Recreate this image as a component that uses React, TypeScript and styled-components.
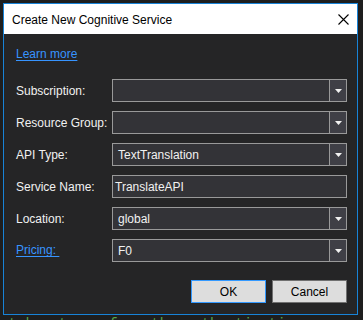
import React from 'react';
import styled, { createGlobalStyle } from 'styled-components';

const GlobalStyle = createGlobalStyle`
    html, body {
        margin: 0;
        padding: 0;
        background: #1e1e1e;
        overflow: hidden;
    }
    body {
        font-family: "Liberation Sans", Arial, sans-serif;
        font-size: 12px;
    }
`

const Page = styled.div`
    width: 363px;
    height: 320px;
    padding: 3px 5px 0 3px;
    box-sizing: border-box;
    overflow: hidden;
`
const Dialog = styled.div`
    width: 355px;
    border: 1px solid #1883d7;
    border-top-color: #1883d7;
    box-sizing: border-box;
    background: #252526;
`
const TitleBar = styled.div`
    height: 30px;
    background: #ffffff;
    display: flex;
    align-items: center;
    justify-content: space-between;
    padding: 0 8px 0 8px;
`
const Title = styled.span`
    color: #000000;
    font-size: 12px;
    padding-top: 1px;
`
const Body = styled.div`
    padding: 13px 10px 11px 12px;
    display: flex;
    flex-direction: column;
`
const Link = styled.a`
    color: #3794ff;
    text-decoration: underline;
    text-underline-offset: 2px;
    line-height: 15px;
    height: 15px;
    white-space: pre;
    cursor: pointer;
`
const Form = styled.div`
    margin-top: 17px;
    display: grid;
    grid-template-columns: 96px 235px;
    grid-auto-rows: 23px;
    row-gap: 9px;
    align-items: center;
`
const Label = styled.span`
    color: #f1f1f1;
`
const Field = styled.div<{ $value?: boolean }>`
    height: 23px;
    box-sizing: border-box;
    border: 1px solid #999999;
    background: #333337;
    color: #f1f1f1;
    display: flex;
    align-items: stretch;
`
const FieldText = styled.span<{ $inset: number }>`
    flex: 1;
    display: flex;
    align-items: center;
    padding-left: ${p => p.$inset}px;
`
const DropButton = styled.span`
    width: 16px;
    border-left: 1px solid #999999;
    background: #3f3f46;
    display: flex;
    align-items: center;
    justify-content: center;
`
const Buttons = styled.div`
    margin-top: 18px;
    display: flex;
    justify-content: flex-end;
    gap: 6px;
    padding-right: 0;
    width: 331px;
`
const Button = styled.button<{ $primary?: boolean }>`
    width: 75px;
    height: 23px;
    box-sizing: border-box;
    border: 1px solid ${p => p.$primary ? '#3399ff' : '#707070'};
    background: #dddddd;
    color: #000000;
    font-family: "Liberation Sans", Arial, sans-serif;
    font-size: 12px;
    padding: 0;
`
const Behind = styled.div`
    margin: 1px 0 0 -3px;
    font-family: "Liberation Mono", monospace;
    font-size: 14px;
    color: #57a64a;
    white-space: pre;
`

const Arrow = () => (
    <svg width="7" height="4" viewBox="0 0 7 4">
        <path d="M0 0 H7 L3.5 4 Z" fill="#f1f1f1" />
    </svg>
)

const Close = () => (
    <svg width="11" height="11" viewBox="0 0 11 11">
        <path d="M0.5 0.5 L10.5 10.5 M10.5 0.5 L0.5 10.5" stroke="#000" strokeWidth="1.1" />
    </svg>
)

type RowProps = { label: string; value?: string; combo?: boolean; link?: boolean }

const rows: RowProps[] = [
    { label: 'Subscription:', combo: true },
    { label: 'Resource Group:', combo: true },
    { label: 'API Type:', value: 'TextTranslation', combo: true },
    { label: 'Service Name:', value: 'TranslateAPI' },
    { label: 'Location:', value: 'global', combo: true },
    { label: 'Pricing: ', value: 'F0', combo: true, link: true },
]

export default function App() {
    return (
        <Page>
            <GlobalStyle />
            <Dialog>
                <TitleBar>
                    <Title>Create New Cognitive Service</Title>
                    <Close />
                </TitleBar>
                <Body>
                    <Link>Learn more</Link>
                    <Form>
                        {rows.map(r => (
                            <React.Fragment key={r.label}>
                                {r.link ? <Link>{r.label}</Link> : <Label>{r.label}</Label>}
                                <Field>
                                    <FieldText $inset={r.combo ? 5 : 2}>{r.value}</FieldText>
                                    {r.combo && <DropButton><Arrow /></DropButton>}
                                </Field>
                            </React.Fragment>
                        ))}
                    </Form>
                    <Buttons>
                        <Button $primary>OK</Button>
                        <Button>Cancel</Button>
                    </Buttons>
                </Body>
            </Dialog>
            <Behind>at key to perform the authentication</Behind>
        </Page>
    )
}
